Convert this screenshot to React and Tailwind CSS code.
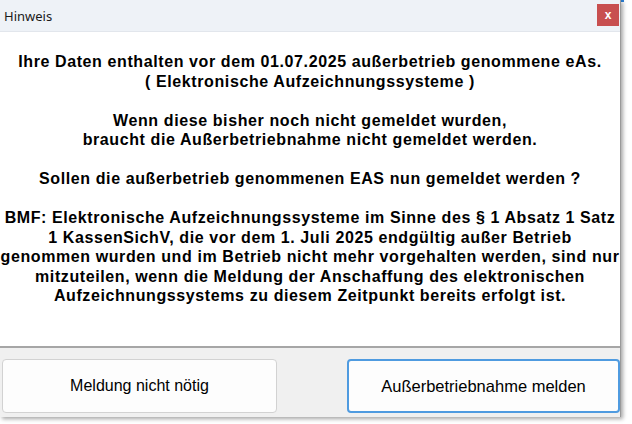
import React from 'react';

const bodyLines = [
  'Ihre Daten enthalten vor dem 01.07.2025 außerbetrieb genommene eAs.',
  '( Elektronische Aufzeichnungssysteme )',
  '',
  'Wenn diese bisher noch nicht gemeldet wurden,',
  'braucht die Außerbetriebnahme nicht gemeldet werden.',
  '',
  'Sollen die außerbetrieb genommenen EAS nun gemeldet werden ?',
  '',
  'BMF: Elektronische Aufzeichnungssysteme im Sinne des § 1 Absatz 1 Satz',
  '1 KassenSichV, die vor dem 1. Juli 2025 endgültig außer Betrieb',
  'genommen wurden und im Betrieb nicht mehr vorgehalten werden, sind nur',
  'mitzuteilen, wenn die Meldung der Anschaffung des elektronischen',
  'Aufzeichnungssystems zu diesem Zeitpunkt bereits erfolgt ist.',
];

export default function App() {
  return (
    <div className="relative w-[632px] h-[424px] bg-white overflow-hidden">
      {/* window behind the dialog */}
      <div className="absolute top-0 left-[324px] w-[300px] h-[2px] bg-[#2b7fd6]" />

      <div className="relative w-[621px] h-[417px] flex flex-col border-r border-[#9a9a9a] shadow-[2px_2px_4px_rgba(0,0,0,0.35)]">
        {/* title bar */}
        <div className="h-[32px] shrink-0 flex items-start justify-between bg-[#eef2f7] border-b border-[#e2e6ec] pl-[4px] pr-[1px]">
          <span className="mt-[7px] text-[13px] leading-[18px] text-[#1a1a1a] font-['Noto_Sans',sans-serif]">Hinweis</span>
          <button className="mt-[4px] w-[22px] h-[22px] flex items-center justify-center bg-[#c84f4f] text-white text-[12px] font-bold leading-none font-['Liberation_Sans',sans-serif]">
            x
          </button>
        </div>

        {/* message */}
        <div className="flex-1 bg-white pt-[20px] text-center text-black font-bold text-[16px] tracking-[0.6px] leading-[19.5px] font-['Liberation_Sans',Arial,sans-serif]">
          {bodyLines.map((line, i) => (
            <div key={i} className="h-[19.5px] whitespace-nowrap">{line}</div>
          ))}
        </div>

        <div className="h-[2px] shrink-0 bg-[#a6a6a6]" />

        {/* buttons */}
        <div className="h-[69px] shrink-0 bg-[#f0f0f0] flex justify-between pt-[11px] pb-[4px] pl-[2px] font-['Liberation_Sans',Arial,sans-serif]">
          <button className="w-[275px] h-[54px] rounded-[4px] bg-[#fdfdfd] border border-[#d2d2d2] text-[16px] text-black">
            Meldung nicht nötig
          </button>
          <button className="w-[273px] h-[54px] rounded-[4px] bg-[#fdfdfd] border-2 border-[#4f9be0] text-[16.5px] text-black">
            Außerbetriebnahme melden
          </button>
        </div>
      </div>
    </div>
  );
}
